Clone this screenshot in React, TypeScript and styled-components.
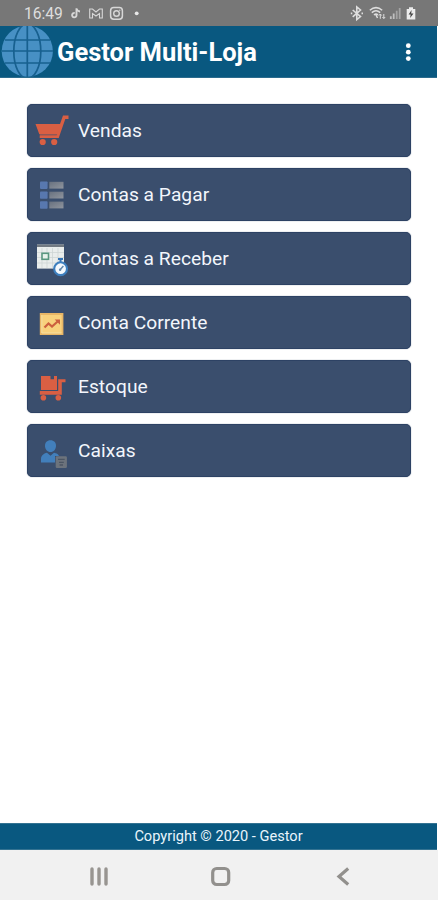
import React from 'react';
import styled, { createGlobalStyle } from 'styled-components';

const GlobalStyle = createGlobalStyle`
  * { box-sizing: border-box; }
  body { margin: 0; background: #fff; }
`;

const Screen = styled.div`
  display: flex;
  flex-direction: column;
  height: 900px;
  background: #fff;
  font-family: Roboto, sans-serif;
  overflow: hidden;
`;

const StatusBar = styled.div`
  display: flex;
  align-items: center;
  justify-content: space-between;
  height: 26px;
  padding: 0 21px 0 24px;
  background: #777777;
  color: #dedede;
`;

const StatusGroup = styled.div`
  display: flex;
  align-items: center;
  height: 26px;
`;

const Clock = styled.span`
  width: 46px;
  font-size: 15.6px;
  line-height: 28px;
  padding-top: 2px;
`;

const Header = styled.header`
  display: flex;
  align-items: center;
  height: 52px;
  margin-right: 1px;
  background: #095880;
  border-bottom: 1px solid #2c6c8e;
  color: #fff;
`;

const Title = styled.h1`
  flex: 1;
  margin: 0 0 0 4px;
  padding-top: 1px;
  font-size: 25.5px;
  font-weight: 700;
  line-height: 50px;
  white-space: nowrap;
`;

const MenuButton = styled.button`
  width: 58px;
  height: 50px;
  padding: 0;
  border: 0;
  background: none;
`;

const Menu = styled.main`
  flex: 1;
  display: flex;
  flex-direction: column;
  gap: 10.9px;
  padding: 26.4px 27px 0;
`;

const MenuCard = styled.button`
  display: flex;
  align-items: center;
  width: 384px;
  height: 53px;
  padding: 0;
  border: 1px solid #2d4264;
  border-radius: 5px;
  background: #3a4e6d;
  box-shadow: 0 0 1px #52647e;
  color: #f2f6fc;
  font-family: inherit;
  font-size: 19.2px;
  text-align: left;

  & > svg {
    margin: 0 1px 0 -1px;
  }
`;

const Label = styled.span`
  letter-spacing: 0.03px;
  line-height: 51px;
`;

const Picture = styled.svg`
  display: block;
  flex: none;
`;

const Footer = styled.footer`
  height: 27px;
  margin-right: 1px;
  border-top: 1px solid #347392;
  border-bottom: 1px solid #347392;
  background: #095880;
  color: #eaf5fc;
  font-size: 14.6px;
  line-height: 25px;
  text-align: center;
`;

const NavBar = styled.nav`
  display: flex;
  justify-content: space-between;
  align-items: center;
  height: 50px;
  padding: 4px 81px 0 85px;
  background: #f1f1f1;
`;

const NavButton = styled.button`
  display: flex;
  justify-content: center;
  width: 28px;
  padding: 0;
  border: 0;
  background: none;
`;

const CartIcon = () => (
  <Picture width="50" height="52" viewBox="0 0 50 52" fill="#d95f43">
    <path d="M8.5 19H33L36 10.5H41.5V14H38.3L31.7 33H12.7V30.6H29.6L30.2 29H12.2Z" />
    <path d="M12.5 29H30.5L29.8 31H13Z" opacity=".55" />
    <circle cx="15.7" cy="37" r="3.1" />
    <circle cx="27.2" cy="37" r="3.1" />
  </Picture>
);

const ListIcon = () => (
  <Picture width="50" height="52" viewBox="0 0 50 52">
    <defs>
      <linearGradient id="rowGrey" x2="1" y2="1">
        <stop offset="0" stopColor="#68717f" />
        <stop offset="1" stopColor="#8f959e" />
      </linearGradient>
    </defs>
    {[12.5, 22.4, 32.3].map((y) => (
      <g key={y}>
        <rect x="13" y={y} width="7.6" height="7.4" rx=".8" fill="#5878af" />
        <rect x="22.3" y={y + 0.3} width="14.2" height="6.8" fill="url(#rowGrey)" />
      </g>
    ))}
  </Picture>
);

const CalendarIcon = () => (
  <Picture width="50" height="52" viewBox="0 0 50 52">
    <rect x="10" y="11.6" width="27" height="24" fill="#e9edec" />
    <rect x="10" y="11.6" width="27" height="2.4" fill="#727a82" />
    <path d="M10 19.5H37M10 24.5H37M10 30H37M15 15V35M20 15V35M25.5 15V35M31 15V35" stroke="#cbd2d3" strokeWidth=".7" />
    <rect x="15" y="20.3" width="6.5" height="6" fill="#e8f2eb" stroke="#5a9780" strokeWidth="1.6" />
    <path d="M31 26H36M33.5 25V29" stroke="#3475b8" strokeWidth="2" />
    <circle cx="33.6" cy="35.7" r="6.4" fill="#f4f9fd" stroke="#3d7fbe" strokeWidth="2.1" />
    <path d="M33.1 36.8L36.4 33" stroke="#6288ab" strokeWidth="1.5" />
    <circle cx="33.1" cy="36.8" r="1.2" fill="#6288ab" />
  </Picture>
);

const ChartIcon = () => (
  <Picture width="50" height="52" viewBox="0 0 50 52">
    <rect x="12.8" y="16" width="23.6" height="22" fill="#e8b666" />
    <rect x="14.8" y="18" width="19.8" height="18" fill="#f8d17c" />
    <path d="M14.8 18V36H34.6" fill="none" stroke="#f6e1a4" strokeWidth="1" />
    <path d="M17.5 30.5L21.5 26.5L25 29.5L31.2 24" fill="none" stroke="#cc603e" strokeWidth="2.2" />
    <path d="M27.7 22.5H33V27.8Z" fill="#cc603e" />
  </Picture>
);

const StockIcon = () => (
  <Picture width="50" height="52" viewBox="0 0 50 52" fill="#d95f43">
    <path d="M14 16H23.5V19.3H27V16H30V30H14Z" />
    <path d="M31.2 19.2H38.5V22.3H34.8V34.8H12.8V31.1H31.2Z" />
    <circle cx="16.4" cy="37.7" r="2.8" />
    <circle cx="31.3" cy="37.7" r="2.8" />
  </Picture>
);

const CashierIcon = () => (
  <Picture width="50" height="52" viewBox="0 0 50 52">
    <path d="M23.5 16.2C27 16.2 29 18.5 29 21.7C29 25 26.7 28.1 23.5 28.1S18 25 18 21.7C18 18.5 20 16.2 23.5 16.2Z" fill="#427fbb" />
    <path d="M14 38.5V35C14 31.8 16.5 29.5 20 28.8L23.5 31.8L27 28.8C29.5 29.2 31.3 30 32 32H28V38.5Z" fill="#427fbb" />
    <rect x="28.7" y="32.3" width="11.2" height="11.6" rx="1.2" fill="#6c737c" />
    <path d="M31 35.4H37.7M32 38.3H36.8M32.6 41H36" stroke="#4c5663" strokeWidth="1.3" />
  </Picture>
);

const GlobeIcon = () => (
  <Picture width="53" height="51" viewBox="0 0 53 51">
    <circle cx="27.3" cy="25.2" r="25.6" fill="#4790c4" />
    <g fill="none" stroke="#17608f" strokeWidth="1.7">
      <path d="M27.3 0V51M2 25H53M5 14H50M5 37H50" />
      <ellipse cx="27.3" cy="25.2" rx="13.5" ry="27.5" />
    </g>
  </Picture>
);

const DotsIcon = () => (
  <Picture width="58" height="50" viewBox="0 0 58 50" fill="#fff">
    <circle cx="29.3" cy="18.7" r="2.4" />
    <circle cx="29.3" cy="25.2" r="2.4" />
    <circle cx="29.3" cy="31.6" r="2.4" />
  </Picture>
);

const NotificationIcons = () => (
  <Picture width="74" height="26" viewBox="70 0 74 26" fill="none" stroke="#d7d7d7">
    <path d="M76.5 8.3V15.2A2.2 2.2 0 1 1 74.7 13M76.5 8.8Q77.4 11.3 80 11.5" strokeWidth="1.9" />
    <path d="M89.7 9H92.5L96 12L99.5 9H102.3V18H99.5V13.5L96 16L92.5 13.5V18H89.7Z" strokeWidth="1.1" />
    <rect x="110.6" y="7.6" width="11.8" height="11.6" rx="3.2" strokeWidth="1.5" />
    <circle cx="116.5" cy="13.5" r="2.8" strokeWidth="1.4" />
    <circle cx="119.8" cy="10.2" r=".7" fill="#d7d7d7" stroke="none" />
    <circle cx="136.7" cy="13.3" r="1.9" fill="#e8e8e8" stroke="none" />
  </Picture>
);

const SignalIcons = () => (
  <Picture width="68" height="26" viewBox="349 0 68 26" fill="none" stroke="#dedede">
    <path d="M352.7 10L360.5 16.6L356.8 19.6V7L360.5 10L352.7 16.8" strokeWidth="1.6" />
    <path d="M350.8 13.3H352.3M361.5 13.3H363" strokeWidth="1.7" />
    <path d="M369.8 10.2Q376 5 382.2 10.2M371.8 12.6Q376 9 380.2 12.6M374 15Q376 13.2 378 15" strokeWidth="1.5" />
    <path d="M376 15L377.5 18" strokeWidth="1.5" />
    <path d="M380.3 18.8V14.2M378.8 15.6L380.3 14L381.8 15.6M383.8 14V18.5M382.4 17L383.8 18.5L385.2 17" strokeWidth="1" />
    <path d="M390.8 19V16.2M393.7 19V13.5" stroke="#c0c0c0" strokeWidth="1.8" />
    <path d="M396.7 19V10.8M399.7 19V8" stroke="#a4a4a4" strokeWidth="1.8" />
    <path d="M409 7.2H413V9H415.3V19.5H406.7V9H409Z" fill="#ececec" stroke="none" />
    <path d="M411.6 10L408.6 14.5H410.7L410.1 18L413.5 13.4H411.2Z" fill="#454545" stroke="none" />
  </Picture>
);

const entries = [
  { label: 'Vendas', Icon: CartIcon },
  { label: 'Contas a Pagar', Icon: ListIcon },
  { label: 'Contas a Receber', Icon: CalendarIcon },
  { label: 'Conta Corrente', Icon: ChartIcon },
  { label: 'Estoque', Icon: StockIcon },
  { label: 'Caixas', Icon: CashierIcon },
];

export default function App() {
  return (
    <>
      <GlobalStyle />
      <Screen>
        <StatusBar>
          <StatusGroup>
            <Clock>16:49</Clock>
            <NotificationIcons />
          </StatusGroup>
          <StatusGroup>
            <SignalIcons />
          </StatusGroup>
        </StatusBar>
        <Header>
          <GlobeIcon />
          <Title>Gestor Multi-Loja</Title>
          <MenuButton aria-label="Menu">
            <DotsIcon />
          </MenuButton>
        </Header>
        <Menu>
          {entries.map(({ label, Icon }) => (
            <MenuCard key={label}>
              <Icon />
              <Label>{label}</Label>
            </MenuCard>
          ))}
        </Menu>
        <Footer>Copyright © 2020 - Gestor</Footer>
        <NavBar>
          <NavButton aria-label="Recentes">
            <Picture width="20" height="22" viewBox="0 0 20 22" stroke="#989591" strokeWidth="3.4" strokeLinecap="round">
              <path d="M3 3V18M10 3V18M17 3V18" />
            </Picture>
          </NavButton>
          <NavButton aria-label="Início">
            <Picture width="22" height="22" viewBox="0 0 22 22" fill="none">
              <rect x="2.7" y="2.5" width="16" height="16" rx="4" stroke="#92908d" strokeWidth="3.2" />
            </Picture>
          </NavButton>
          <NavButton aria-label="Voltar">
            <Picture width="18" height="22" viewBox="0 0 18 22" fill="none">
              <path d="M14.2 2.5L5 10.5L14.2 18.5" stroke="#92908d" strokeWidth="3.2" />
            </Picture>
          </NavButton>
        </NavBar>
      </Screen>
    </>
  );
}
